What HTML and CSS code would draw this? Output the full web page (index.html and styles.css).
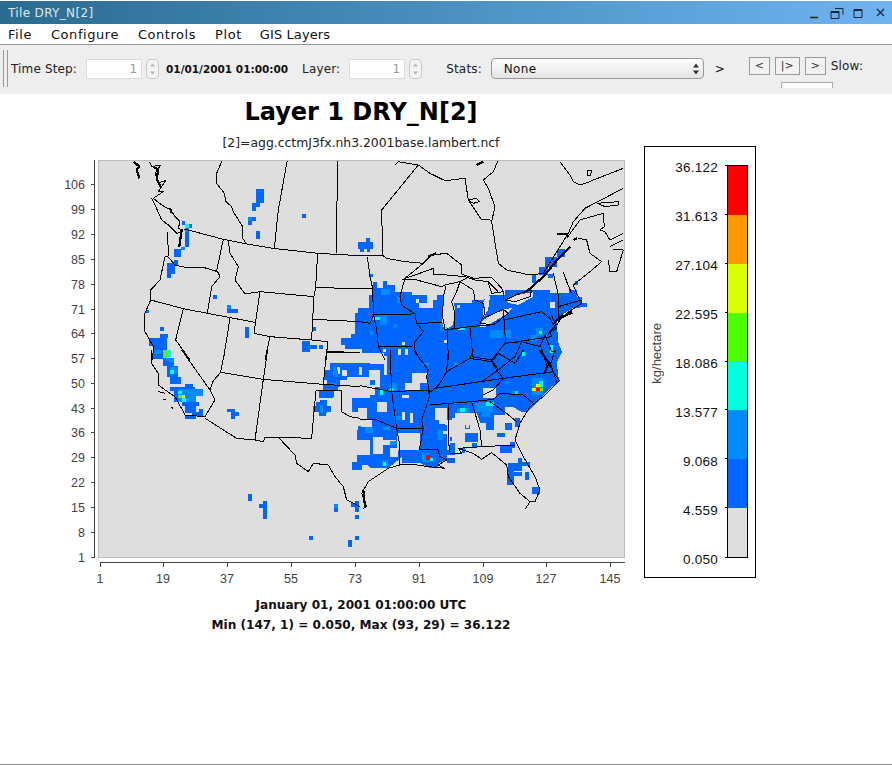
FILE: index.html
```html
<!DOCTYPE html>
<html lang="en">
<head>
<meta charset="utf-8">
<title>Tile DRY_N[2]</title>
<link rel="stylesheet" href="styles.css">
</head>
<body>
<div class="window">
  <header class="titlebar">
    <span class="title-text">Tile DRY_N[2]</span>
    <div class="win-controls">
      <svg class="win-icon" width="14" height="14" viewBox="0 0 14 14"><path d="M2 11.500h8" stroke="#1c2c14" stroke-width="1.600" fill="none"/></svg>
      <svg class="win-icon" width="14" height="14" viewBox="0 0 14 14"><path d="M1 5.500h8v7h-8z M1 6.500h8 M5 2.500h8v6" stroke="#12233a" stroke-width="1" fill="none"/></svg>
      <svg class="win-icon" width="14" height="14" viewBox="0 0 14 14"><path d="M2 3.500h8v8h-8z M2 4.500h8" stroke="#12233a" stroke-width="1" fill="none"/></svg>
      <svg class="win-icon" width="14" height="14" viewBox="0 0 14 14"><path d="M3 3l7 7M10 3l-7 7" stroke="#12233a" stroke-width="1.100" fill="none"/></svg>
    </div>
  </header>
  <nav class="menubar">
    <span class="menu-item">File</span>
    <span class="menu-item">Configure</span>
    <span class="menu-item">Controls</span>
    <span class="menu-item">Plot</span>
    <span class="menu-item">GIS Layers</span>
  </nav>
  <div class="toolbar">
    <div class="toolbar-inner">
      <div class="grip"></div>
      <span class="tb-label tb-time">Time Step:</span>
      <div class="num-input">1</div>
      <div class="stepper"><svg width="13" height="20" viewBox="0 0 13 20"><path d="M4 7.500l2.500-3 2.500 3z M4 12.500l2.500 3 2.500-3z" fill="#b5b5b5"/></svg></div>
      <span class="tb-date">01/01/2001 01:00:00</span>
      <span class="tb-label tb-layer">Layer:</span>
      <div class="num-input">1</div>
      <div class="stepper"><svg width="13" height="20" viewBox="0 0 13 20"><path d="M4 7.500l2.500-3 2.500 3z M4 12.500l2.500 3 2.500-3z" fill="#b5b5b5"/></svg></div>
      <span class="tb-label tb-stats">Stats:</span>
      <div class="select">
        <span>None</span>
        <svg width="8" height="14" viewBox="0 0 8 14"><path d="M1 5.500l3-4 3 4z M1 8.500l3 4 3-4z" fill="#333"/></svg>
      </div>
      <span class="tb-arrow">&gt;</span>
      <div class="player">
        <div class="player-row">
          <span class="p-btn p-step">&lt;</span>
          <span class="p-btn p-play">|&gt;</span>
          <span class="p-btn p-step">&gt;</span>
          <span class="tb-label">Slow:</span>
        </div>
        <div class="slow-box"></div>
      </div>
    </div>
  </div>
  <main class="plot">
    <section class="chart-col">
      <h1 class="plot-title">Layer 1 DRY_N[2]</h1>
      <p class="plot-sub">[2]=agg.cctmJ3fx.nh3.2001base.lambert.ncf</p>
      <svg class="chart" width="580" height="440" viewBox="60 146 580 440">
        <defs><clipPath id="plot-clip"><rect x="99" y="161" width="525" height="396"/></clipPath></defs>
        <rect class="map-bg" x="98.500" y="160.500" width="526" height="397"/>
        <g class="cells">
          <path class="c-blue" d="M373 282H377V288H383V281H387V285H395V292H412V295H427V308H433V300H437V295H444V300H453V303H472V300H483L488 295H505V290H550V293H569V290H577V297H582V303H587V307L573 308 562 315 557 322 558 342 562 352 557 362 558 375 560 381 550 388 543 396 533 407 527 412H522L513 407H505V415H494V430H486V423H480L477 413H455V418H452V425H447V450H455V455H447V460L440 462 437 468H430L420 463H402V457L392 465 388 468H370L367 465 362 470H352V463H357V455H362V440H357V433L358 427H372V420H367V412H352V398H370V353H362V349H345V345H341V338H351V334H355V313H358V308H369V295H373Z"/>
          <path class="c-blue" d="M330 363h40v14h-23v3h-7v7h-13v-7h-3v-10h6z M320 390h14v7h-14z M320 400h7v13h-7z M323 385h15v5h-15z M319 391h14v7h-14z M316 402h11v4h-11z M313 406h18v6h-18z M319 412h7v4h-7z M352 462h8v7h-8z M357 456h3v6h-3z M357 433h3v7h-3z M358 426h3v7h-3z
          M465 433h13v9h-13z M472 443h5v5h-5z M450 443h5v10h-5z M450 437h2v4h-2z M462 448h3v5h-3z M465 425h5v4h-5z M497 433h8v4h-8z M505 423h7v7h-7z M515 418h5v9h-5z M500 445h12v8h-12z M510 442h5v6h-5z M508 463h10v8h-10z M518 458h4v13h-4z M522 462h8v4h-8z M513 472h9v4h-9z M507 467h7v18h-7z M525 472h4v8h-4z M532 487h8v7h-8z M447 458h8v5h-8z
          M160 334h8v4h-8z M149 338h18v8h-18z M153 346h14v13h-14z M163 358h11v8h-11z M167 366h11v11h-11z M170 377h11v7h-11z M170 387h25v4h-25z M185 384h8v4h-8z M174 391h22v11h-22z M182 402h17v4h-17z M185 406h11v7h-11z M199 409h4v7h-4z M192 412h8v4h-8z M185 416h11v3h-11z
          M227 409h8v3h-8z M231 412h4v7h-4z M235 412h4v4h-4z M248 494h4v7h-4z M259 504h4v4h-4z M263 501h4v18h-4z M334 504h4v8h-4z M355 515h4v4h-4z M355 501h4v11h-4z M351 503h4v4h-4z M309 536h4v4h-4z M348 540h4v7h-4z M355 536h4v4h-4z
          M182 221h3v4h-3z M188 224h4v4h-4z M185 228h4v19h-4z M174 249h7v8h-7z M174 260h4v5h-4z M167 263h8v11h-8z M167 274h4v4h-4z M213 295h4v4h-4z M227 309h11v4h-11z M245 327h4v11h-4z M160 327h4v4h-4z M146 310h3v3h-3z M312 327h4v4h-4z M302 341h8v11h-8z M310 345h7v4h-7z M319 345h4v4h-4z
          M256 189h8v14h-8z M252 203h8v4h-8z M252 207h4v4h-4z M248 217h8v4h-8z M248 221h4v4h-4z M256 231h4v8h-4z M302 214h4v4h-4z M358 242h15v7h-15z M366 238h4v4h-4z M360 249h4v3h-4z M367 249h3v3h-3z
          M539 267h9v8h-9z M545 257h12v10h-12z M557 249h8v8h-8z M532 274h4v9h-4z M548 274h5v4h-5z M575 281h3v4h-3z M370 274h3v3h-3z"/>
          <path class="c-gray" d="M443 300L442 325 446 330 453 325 455 308 453 300z M483 303L488 293 490 297 488 310 483 318z M480 327L483 320 500 310 512 308 505 315 493 322 485 327z M507 300L517 295 533 292 533 297 518 305 508 303z
          M416 299h3v4h-3z M419 303h8v5h-8z M550 302h5v6h-5z M457 305h3v3h-3z M402 342h3v3h-3z M383 349h3v3h-3z M398 349h3v6h-3z M405 349h3v6h-3z
          M370 353h14v11h-14z M384 356h3v19h-3z M337 367h3v7h-3z M342 370h5v6h-5z M359 367h3v8h-3z M369 370h11v10h-11z M375 380h5v7h-5z M370 385h5v10h-5z
          M377 402h10v10h-10z M358 408h9v12h-9z M402 395h7v3h-7z M412 373h15v10h-15z M405 383h15v7h-15z M402 412h3v8h-3z M410 413h3v10h-3z M435 408h12v12h-12z M445 420h7v5h-7z M397 433h23v17h-23z M373 437h10v17h-10z M383 440h13v5h-13z M362 440h8v15h-8z M362 465h5v5h-5z M390 448h8v9h-8z M483 388h13v10h-13z M444 340h3v3h-3z M466 425h3v3h-3z M439 420h8v4h-8z M439 431h8v3h-8z"/>
          <path class="c-light" d="M381 289h9v6h-9z M397 296h4v7h-4z M370 331h3v4h-3z M394 324h3v4h-3z M380 315h7v10h-7z M440 323h3v8h-3z M454 363h4v4h-4z M422 363h7v3h-7z M333 367h3v8h-3z M390 383h7v7h-7z M365 427h8v6h-8z M383 427h7v3h-7z M390 441h7v4h-7z M382 460h6v6h-6z M320 405h3v8h-3z M330 383h7v3h-7z M335 370h3v7h-3z M394 416h7v4h-7z M438 430h5v10h-5z M422 453h8v9h-8z M490 330h13v8h-13z M505 330h6v8h-6z M536 328h7v8h-7z M530 335h7v6h-7z M532 378h11v17h-11z M475 403h18v9h-18z M482 412h8v5h-8z M457 408h13v5h-13z M505 381h3v3h-3z M512 391h3v4h-3z M153 350h8v4h-8z M163 358h11v4h-4z M170 367h8v7h-8z M178 389h25v7h-7v6h-18z M248 217h4v4h-4z M227 305h4v4h-4z M181 247h4v3h-4z M185 228h3v4h-3z M334 504h4v4h-4z"/>
          <path class="c-cyan" d="M373 317h7v3h-7z M444 327h3v3h-3z M380 390h3v5h-3z M390 388h3v4h-3z M383 462h3v4h-3z M430 458h3v3h-3z M458 328h7v2h-7z M522 352h3v4h-3z M550 345h3v8h-3z M539 381h4v6h-4z M486 402h8v4h-8z M460 408h5v4h-5z M515 391h3v4h-3z M170 370h4v4h-4z M167 350h4v7h-4z M178 391h4v3h-4z M182 398h4v4h-4z M185 224h4v4h-4z"/>
          <path class="c-green" d="M539 331h3v3h-3z M163 350h4v8h-4z M178 395h4v3h-4z M539 388h4v3h-4z"/>
          <path class="c-yellow" d="M536 384h4v3h-4z M532 388h4v3h-4z M182 395h3v3h-3z"/>
          <path class="c-red" d="M536 388h4v3h-4z M426 455h4v5h-4z"/>
        </g>
        <g class="map-lines" clip-path="url(#plot-clip)">
          <g transform="translate(90 150) scale(.3333)">
            <path d="M283 237L400 268 470 282 550 295 683 310 810 317"/>
            <path d="M397 30L380 70 380 100 403 130 408 155 425 170 430 185 458 230 458 265 470 282"/>
            <path d="M592 30L565 180 553 295M742 30L740 310"/>
            <path d="M178 35L185 50 212 45 195 70 205 100 228 90 205 125 220 125 190 145 215 165 242 180 255 200 270 215 265 235 280 240"/>
            <path d="M185 145L195 165 215 210 235 225 260 250 278 245M233 245L235 318 225 320 210 390 182 420 182 450 165 490 165 545 190 590 188 630"/>
            <path d="M232 318L255 345 285 352 340 352 383 365 390 380 365 410 352 490M400 268L380 362"/>
            <path d="M182 450L280 476 352 490 495 517M420 505L400 630M280 476L257 570 300 630"/>
            <path d="M415 272L420 310 445 350 435 390 465 432 510 425 492 550 540 560 665 570 712 575 710 630M510 425L672 440M683 310L677 412 672 440 668 508 665 570M540 560L525 630M677 412L810 417M668 508L810 515M710 605L810 607"/>
            <path class="thick" d="M132 35L148 50 140 60 148 85M190 50L205 60 200 85 212 110M240 175L245 190M275 240L268 290"/>
          </g>
          <g transform="translate(360 150) scale(.3333)">
            <path d="M0 316H68L80 325 135 335 190 340 215 315 260 310 305 345 305 372 340 385 395 382 425 415 430 425"/>
            <path d="M65 180L68 316M65 180L175 45 210 70 255 92 315 85 325 150 365 210 390 210 395 215 415 340 440 360 510 375 550 370 625 250 640 215 675 175 790 115M105 45L115 35 175 45"/>
            <path d="M415 30L400 65 370 90 385 115 405 170 395 215M325 150L350 145 358 155 340 160zM712 160L775 155 775 165 735 170z"/>
            <path d="M190 340L135 385 125 420 120 440 125 465 165 492 170 520 190 545 165 575 165 600 180 630M135 385L165 375 220 355 220 375 260 375 315 380 345 390 385 395 415 425"/>
            <path d="M125 390L170 390 245 410 255 405 300 395 320 385M22 320L30 380 38 415 40 490 50 540 55 590 75 630M0 415H38M38 493L165 492M0 515L30 520 40 495M55 590L160 588M170 520L245 518"/>
            <path d="M258 407L250 440 248 500 255 540 285 535 285 490 275 455 290 425 300 395 340 420 345 450 370 460 375 490 360 520 400 525 445 490 430 478 370 505M435 450L480 430 515 420 510 440 465 455zM385 400L395 430 430 425 432 450"/>
            <path d="M262 535L265 630M258 540L328 530 390 525M330 535L340 630M432 510L437 580M432 510L545 485 570 505 585 530 570 545 575 560 437 580M432 510L430 478"/>
            <path d="M580 370L595 435 595 505M610 365L622 400 635 430M595 470L665 450M595 505L640 490M690 365L640 405 650 430 665 460 620 490 600 510 590 525"/>
            <path d="M600 35L630 75 640 95 660 105 690 95 700 90 790 55M682 60L695 62 690 78 682 75zM620 265L660 210 730 190 733 230 720 240 735 245 750 270 790 250M655 265L680 270 690 310 725 335 690 365M745 330L750 365 770 365 790 300 760 300M750 290L790 270"/>
            <path class="thick" d="M500 425L550 380 600 320 630 290M590 252H625M350 45L370 35M205 320L228 310M590 510L610 495M640 270L652 265"/>
          </g>
          <g transform="translate(90 350) scale(.3333)">
            <path d="M185 0L185 40 205 70 205 105 240 130 255 140 280 185 285 195 345 200 375 150 360 120 275 0M345 205L440 265 495 270 520 275 525 262 565 262 665 265 678 122 755 122 755 185 780 200 810 205M405 0L392 67 370 92 360 120M392 67L520 88 700 103 810 110M533 0L520 88 495 270M710 0L700 103M710 8H810"/>
            <path d="M565 262L615 315 620 340 655 365 670 340 715 345 735 380 760 410 770 450 810 470M205 125L225 130M220 150H227M245 170L248 177"/>
          </g>
          <g transform="translate(360 350) scale(.3333)">
            <path d="M90 0L95 125 110 235 120 290 120 345M0 107L95 125 205 120 205 130 225 115M0 210L50 210 110 235 190 235"/>
            <path d="M160 0L205 60 200 80 210 135 185 210 190 235 178 300 235 300 240 320 260 330 235 345 255 355 205 350 170 345 120 345 85 355 25 395 5 430 20 470 10 475"/>
            <path d="M225 115L240 100 260 65 265 0M260 65L330 25 395 35 410 60 430 85M225 115L430 85 580 65M330 25L340 0M395 35L415 10 465 40 490 0"/>
            <path d="M210 165L265 160 335 155 400 148 420 130 490 135 520 160M370 135L400 120 430 85M390 155L440 190 470 215M335 155L360 240 365 290 295 295 340 310 365 328 395 308 440 345 445 380 480 430 510 455 495 478M365 290L465 285M265 160L265 270 270 310 305 310 295 295"/>
            <path d="M598 92L570 50 585 0M598 92L550 140 510 170 480 220 465 270 490 320 525 380 540 420 525 455 510 455"/>
            <path class="thick" d="M10 420L15 470M540 0L560 30 570 50"/>
          </g>
          <g transform="translate(450 285) scale(.3333)">
            <path d="M165 175L215 170 195 215 145 255 125 225 165 175M65 215L125 225M145 255L95 290M215 170L270 185 285 150 305 200 318 200M275 190L290 240 280 270 300 230 320 290M305 90L320 130 295 145"/>
            <path class="thick" d="M315 110L340 95 365 80"/>
          </g>
        </g>
        <rect class="map-frame" x="98.500" y="160.500" width="526" height="397"/>
        <g class="axis">
          <path d="M94.500 160V558M91 184.500h3M91 209.500h3M91 234.500h3M91 259.500h3M91 284.500h3M91 309.500h3M91 333.500h3M91 358.500h3M91 383.500h3M91 408.500h3M91 432.500h3M91 457.500h3M91 482.500h3M91 507.500h3M91 532.500h3M91 557.500h3"/>
          <path d="M100 562.500H625M100.500 562v5M163.500 562v5M227.500 562v5M291.500 562v5M355.500 562v5M419.500 562v5M483.500 562v5M546.500 562v5M610.500 562v5"/>
        </g>
        <g class="tick-y">
          <text x="85" y="189">106</text><text x="85" y="214">99</text><text x="85" y="239">92</text><text x="85" y="264">85</text><text x="85" y="289">78</text><text x="85" y="314">71</text><text x="85" y="338">64</text><text x="85" y="363">57</text><text x="85" y="388">50</text><text x="85" y="413">43</text><text x="85" y="437">36</text><text x="85" y="462">29</text><text x="85" y="487">22</text><text x="85" y="512">15</text><text x="85" y="537">8</text><text x="85" y="562">1</text>
        </g>
        <g class="tick-x">
          <text x="100" y="583">1</text><text x="163" y="583">19</text><text x="227" y="583">37</text><text x="291" y="583">55</text><text x="355" y="583">73</text><text x="419" y="583">91</text><text x="483" y="583">109</text><text x="546" y="583">127</text><text x="610" y="583">145</text>
        </g>
      </svg>
      <p class="plot-foot plot-foot-first">January 01, 2001 01:00:00 UTC</p>
      <p class="plot-foot">Min (147, 1) = 0.050, Max (93, 29) = 36.122</p>
    </section>
    <aside class="legend">
      <span class="legend-unit">kg/hectare</span>
      <div class="legend-labels">
        <span>36.122</span><span>31.613</span><span>27.104</span><span>22.595</span><span>18.086</span><span>13.577</span><span>9.068</span><span>4.559</span><span>0.050</span>
      </div>
      <div class="legend-bar">
        <i class="seg s-red"></i><i class="seg s-orange"></i><i class="seg s-yellow"></i><i class="seg s-green"></i><i class="seg s-cyan"></i><i class="seg s-light"></i><i class="seg s-blue"></i><i class="seg s-gray"></i>
      </div>
    </aside>
  </main>
</div>
</body>
</html>
```

FILE: styles.css
```css
* { box-sizing: border-box; }
html, body { margin: 0; padding: 0; background: #fff; }
body { font-family: "DejaVu Sans", sans-serif; color: #111; overflow: hidden; }
.window { width: 892px; height: 765px; display: flex; flex-direction: column; border-bottom: 1px solid #8a8a8a; }

.titlebar { height: 23px; margin-top: 1px; flex: none; display: flex; align-items: center; justify-content: space-between; padding: 0 4px 0 8px; background: linear-gradient(90deg, #2a6b90 0%, #4a90c0 50%, #6fb4f2 100%); }
.title-text { font-size: 12px; color: #dfe8ee; letter-spacing: .35px; }
.win-controls { display: flex; gap: 8px; }
.win-icon { display: block; }

.menubar { height: 21px; flex: none; display: flex; align-items: center; background: #fff; border-bottom: 1px solid #999; padding-left: 8px; gap: 19px; font-size: 13px; letter-spacing: .55px; }
.menu-item { color: #111; }
.menu-item:last-child { letter-spacing: .1px; margin-left: -1px; }

.toolbar { height: 49px; flex: none; background: #eee; padding-bottom: 6px; }
.toolbar-inner { height: 43px; overflow: hidden; display: flex; align-items: center; font-size: 12px; padding: 4px 0 0 3px; }
.grip { width: 5px; height: 37px; border-left: 1px solid #999; border-right: 1px solid #999; margin-right: 3px; flex: none; align-self: flex-start; margin-top: 1px; }
.tb-label { color: #222; letter-spacing: .15px; white-space: nowrap; }
.tb-time { margin-right: 9px; }
.tb-layer { margin-left: 15px; margin-right: 9px; }
.tb-stats { margin-left: 24px; margin-right: 9px; }
.num-input { width: 56px; height: 20px; background: #fff; border: 1px solid #ddd; color: #999; font-size: 12px; text-align: right; padding-right: 4px; line-height: 18px; }
.stepper { width: 13px; height: 20px; margin-left: 4px; background: #f4f4f4; border: 1px solid #c9c9c9; border-radius: 4px; flex: none; overflow: hidden; }
.stepper svg { display: block; margin: -1px; }
.tb-date { font-size: 10.500px; font-weight: bold; margin-left: 7px; white-space: nowrap; color: #111; width: 121px; }
.select { width: 213px; height: 21px; flex: none; display: flex; align-items: center; justify-content: space-between; padding: 0 3px 0 12px; border: 1px solid #999; border-radius: 4px; background: linear-gradient(#fff, #f1f1f1 50%, #e4e4e4); font-size: 12px; letter-spacing: .3px; }
.tb-arrow { margin-left: 11px; font-size: 12px; width: 34px; flex: none; }
.player { display: flex; flex-direction: column; align-self: flex-start; margin-top: 7px; }
.player-row { display: flex; align-items: center; height: 19px; gap: 5px; }
.p-btn { height: 18px; border: 1px solid #999; background: #f2f2f2; color: #333; font-size: 11px; line-height: 15px; text-align: center; }
.p-step { width: 21px; }
.p-play { width: 25px; }
.slow-box { width: 52px; height: 20px; margin: 7px 0 0 32px; background: #fff; border: 1px solid #aaa; }

.plot { flex: 1; display: flex; align-items: flex-start; padding-left: 60px; background: #fff; }
.chart-col { width: 584px; flex: none; }
.plot-title { margin: 3px 0 0; padding-left: 18px; height: 30px; font-size: 24px; line-height: 30px; font-weight: bold; text-align: center; color: #000; white-space: nowrap; }
.plot-sub { margin: 0; padding: 9px 0 0 18px; height: 19px; font-size: 12.400px; line-height: 14px; text-align: center; color: #222; white-space: nowrap; }
.chart { display: block; }
.map-bg { fill: #dedede; }
.map-frame { fill: none; stroke: #bbb; stroke-width: 1; }
.cells path { shape-rendering: crispEdges; }
.c-blue { fill: #0066ff; }
.c-gray { fill: #dedede; }
.c-light { fill: #008cff; }
.c-cyan { fill: #00ffdd; }
.c-green { fill: #4dff00; }
.c-yellow { fill: #d9ff00; }
.c-red { fill: #ff0000; }
.map-lines path { fill: none; stroke: #000; stroke-width: 1; stroke-linejoin: round; vector-effect: non-scaling-stroke; shape-rendering: crispEdges; }
.map-lines path.thick { stroke-width: 2.200; }
.axis path { fill: none; stroke: #444; stroke-width: 1; shape-rendering: crispEdges; }
.tick-y text, .tick-x text { font-family: "Liberation Sans", sans-serif; font-size: 12.500px; fill: #444; }
.tick-y text { text-anchor: end; }
.tick-x text { text-anchor: middle; }
.plot-foot { margin: 0; padding-left: 18px; height: 20px; font-size: 12.100px; line-height: 20px; font-weight: bold; text-align: center; color: #111; white-space: nowrap; }
.plot-foot-first { margin-top: 9px; }

.legend { width: 112px; height: 432px; flex: none; margin-top: 52px; border: 1px solid #000; background: #fff; display: flex; padding: 18px 7px 0 4px; }
.legend-unit { writing-mode: vertical-rl; transform: rotate(180deg); font-family: "Liberation Sans", sans-serif; font-size: 13px; color: #444; align-self: flex-start; margin-top: 158px; width: 15px; }
.legend-labels { width: 55px; margin-top: -5px; height: 407px; display: flex; flex-direction: column; justify-content: space-between; align-items: flex-end; font-family: "Liberation Sans", sans-serif; font-size: 13.500px; line-height: 15px; color: #111; letter-spacing: .25px; }
.legend-bar { width: 21px; height: 393px; margin-left: 9px; border: 1px solid #000; display: flex; flex-direction: column; flex: none; }
.seg { display: block; flex: 1; position: relative; }
.seg::before { content: ""; position: absolute; left: -3px; top: -1px; width: 2px; height: 1px; background: #000; }
.s-gray::after { content: ""; position: absolute; left: -3px; bottom: -1px; width: 2px; height: 1px; background: #000; }
.s-red { background: #ff0000; }
.s-orange { background: #ff9900; }
.s-yellow { background: #d9ff00; }
.s-green { background: #4dff00; }
.s-cyan { background: #00ffdd; }
.s-light { background: #008cff; }
.s-blue { background: #0066ff; }
.s-gray { background: #dedede; }
```
